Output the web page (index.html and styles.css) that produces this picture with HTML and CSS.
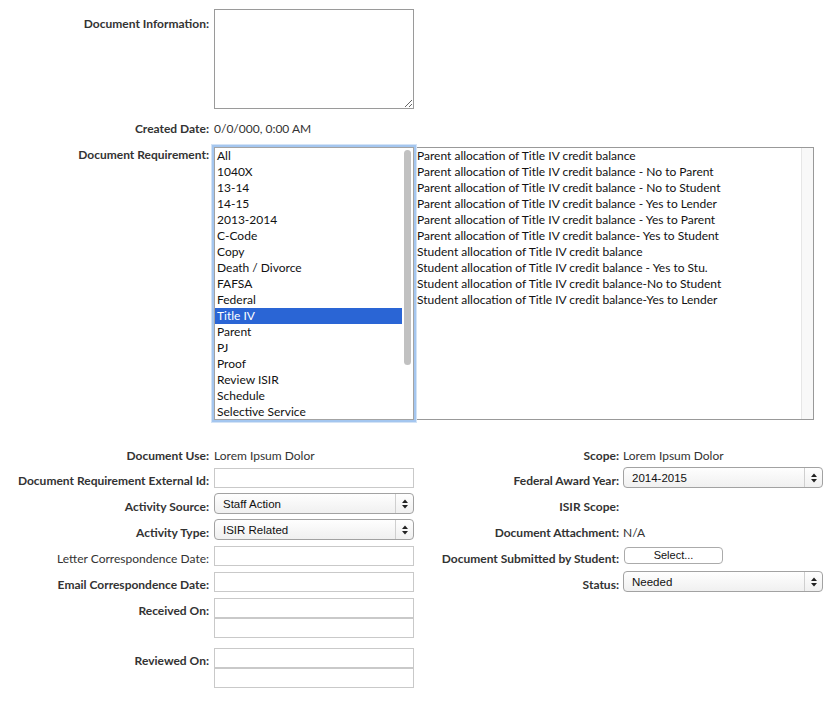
FILE: index.html
```html
<!DOCTYPE html>
<html>
<head>
<meta charset="utf-8">
<title>Document</title>
<link rel="stylesheet" href="styles.css">
</head>
<body>
<div class="page">
  <div class="top">
    <div class="row">
      <div class="label lbl-info">Document Information:</div>
      <textarea class="ta"></textarea>
    </div>
    <div class="row r-created">
      <div class="label">Created Date:</div>
      <div class="value">0/0/000, 0:00 AM</div>
    </div>
    <div class="row r-req">
      <div class="label">Document Requirement:</div>
      <div class="listbox">
        <ul class="items">
          <li>All</li>
          <li>1040X</li>
          <li>13-14</li>
          <li>14-15</li>
          <li>2013-2014</li>
          <li>C-Code</li>
          <li>Copy</li>
          <li>Death / Divorce</li>
          <li>FAFSA</li>
          <li>Federal</li>
          <li class="selected">Title IV</li>
          <li>Parent</li>
          <li>PJ</li>
          <li>Proof</li>
          <li>Review ISIR</li>
          <li>Schedule</li>
          <li>Selective Service</li>
        </ul>
        <div class="vscroll"><div class="thumb"></div></div>
      </div>
      <div class="reslist">
        <ul class="items">
          <li>Parent allocation of Title IV credit balance</li>
          <li>Parent allocation of Title IV credit balance - No to Parent</li>
          <li>Parent allocation of Title IV credit balance - No to Student</li>
          <li>Parent allocation of Title IV credit balance - Yes to Lender</li>
          <li>Parent allocation of Title IV credit balance - Yes to Parent</li>
          <li>Parent allocation of Title IV credit balance- Yes to Student</li>
          <li>Student allocation of Title IV credit balance</li>
          <li>Student allocation of Title IV credit balance - Yes to Stu.</li>
          <li>Student allocation of Title IV credit balance-No to Student</li>
          <li>Student allocation of Title IV credit balance-Yes to Lender</li>
        </ul>
        <div class="track"></div>
      </div>
    </div>
  </div>

  <div class="bottom">
    <div class="col col-left">
      <div class="f first">
        <div class="flabel">Document Use:</div>
        <div class="fval">Lorem Ipsum Dolor</div>
      </div>
      <div class="f">
        <div class="flabel">Document Requirement External Id:</div>
        <div class="input"></div>
      </div>
      <div class="f">
        <div class="flabel">Activity Source:</div>
        <div class="dd"><span class="dd-text">Staff Action</span><span class="dd-arrow"><svg width="6" height="10" viewBox="0 0 6 10"><polygon points="3,0.5 6,4 0,4" fill="#222"/><polygon points="0,6 6,6 3,9.5" fill="#222"/></svg></span></div>
      </div>
      <div class="f">
        <div class="flabel">Activity Type:</div>
        <div class="dd"><span class="dd-text">ISIR Related</span><span class="dd-arrow"><svg width="6" height="10" viewBox="0 0 6 10"><polygon points="3,0.5 6,4 0,4" fill="#222"/><polygon points="0,6 6,6 3,9.5" fill="#222"/></svg></span></div>
      </div>
      <div class="f">
        <div class="flabel normal">Letter Correspondence Date:</div>
        <div class="input"></div>
      </div>
      <div class="f">
        <div class="flabel">Email Correspondence Date:</div>
        <div class="input"></div>
      </div>
      <div class="f tall">
        <div class="flabel">Received On:</div>
        <div class="stack"><div class="input"></div><div class="input"></div></div>
      </div>
      <div class="f tall">
        <div class="flabel">Reviewed On:</div>
        <div class="stack"><div class="input"></div><div class="input"></div></div>
      </div>
    </div>

    <div class="col col-right">
      <div class="f first">
        <div class="flabel">Scope:</div>
        <div class="fval">Lorem Ipsum Dolor</div>
      </div>
      <div class="f">
        <div class="flabel">Federal Award Year:</div>
        <div class="dd"><span class="dd-text">2014-2015</span><span class="dd-arrow"><svg width="6" height="10" viewBox="0 0 6 10"><polygon points="3,0.5 6,4 0,4" fill="#222"/><polygon points="0,6 6,6 3,9.5" fill="#222"/></svg></span></div>
      </div>
      <div class="f">
        <div class="flabel">ISIR Scope:</div>
        <div class="fval"></div>
      </div>
      <div class="f">
        <div class="flabel">Document Attachment:</div>
        <div class="fval">N/A</div>
      </div>
      <div class="f">
        <div class="flabel">Document Submitted by Student:</div>
        <div class="btn">Select...</div>
      </div>
      <div class="f">
        <div class="flabel">Status:</div>
        <div class="dd"><span class="dd-text">Needed</span><span class="dd-arrow"><svg width="6" height="10" viewBox="0 0 6 10"><polygon points="3,0.5 6,4 0,4" fill="#222"/><polygon points="0,6 6,6 3,9.5" fill="#222"/></svg></span></div>
      </div>
    </div>
  </div>
</div>
</body>
</html>
```

FILE: styles.css
```css
* { box-sizing: border-box; }

body {
  margin: 0;
  background: #fff;
  font-family: Lato, "Open Sans", sans-serif;
  font-size: 12px;
  color: #333;
}

.top { padding-top: 9px; }

.row {
  display: flex;
  align-items: flex-start;
}

.label {
  width: 209px;
  margin-right: 5px;
  flex-shrink: 0;
  text-align: right;
  font-weight: bold;
  line-height: 16px;
  color: #333;
}

.lbl-info { padding-top: 7px; }

.ta {
  display: block;
  width: 200px;
  height: 100px;
  margin: 0;
  padding: 2px;
  border: 1px solid #9a9a9a;
  font: inherit;
  resize: both;
}

.r-created { margin-top: 12px; line-height: 16px; }
.value { line-height: 16px; }

.r-req { margin-top: 10px; }

.listbox {
  position: relative;
  z-index: 1;
  display: flex;
  width: 200px;
  height: 273px;
  border: 1px solid #a3a3a3;
  background: #fff;
  box-shadow: 0 0 0 2px #a4c6ef, 0 0 0 3px #d3e3f6;
}

.items {
  flex: 1;
  margin: 0;
  padding: 0;
  list-style: none;
  overflow: hidden;
  color: #111;
}

.items li {
  padding-left: 2px;
  line-height: 16px;
  white-space: nowrap;
}

.items li.selected {
  background: #2a65d5;
  color: #fff;
}

.vscroll {
  width: 11px;
  padding: 2px 2px 0 2px;
  flex-shrink: 0;
}

.thumb {
  width: 7px;
  height: 215px;
  border-radius: 4px;
  background: #c1c1c1;
}

.reslist {
  display: flex;
  width: 400px;
  height: 273px;
  border: 1px solid #999;
  background: #fff;
}

.track {
  width: 12px;
  flex-shrink: 0;
  background: #f8f8f8;
  border-left: 1px solid #e6e6e6;
}

.bottom {
  display: flex;
  margin-top: 20px;
}

.col-left { width: 414px; }
.col-right { width: 409px; }

.f {
  display: flex;
  align-items: flex-start;
  height: 26px;
}

.f.tall { height: 50px; }

.flabel {
  flex-shrink: 0;
  padding-top: 7px;
  text-align: right;
  font-weight: bold;
  line-height: 16px;
  color: #333;
}

.flabel.normal { font-weight: normal; }

.col-left .flabel { width: 209px; margin-right: 5px; }
.col-right .flabel { width: 205px; margin-right: 4px; }

.fval {
  padding-top: 7px;
  line-height: 16px;
}

.f.first .flabel,
.f.first .fval { padding-top: 8px; }

.input {
  width: 200px;
  height: 20px;
  margin-top: 2px;
  border: 1px solid #c9c9c9;
  background: #fff;
}

.stack .input + .input { margin-top: 0; }

.dd {
  display: flex;
  align-items: center;
  width: 200px;
  height: 21px;
  margin-top: 1px;
  border: 1px solid #a2a2a2;
  border-radius: 4px;
  background: linear-gradient(#fefefe, #f0f0f0);
  font-family: "Liberation Sans", Arial, sans-serif;
  font-size: 11.5px;
  color: #111;
}

.dd-text {
  flex: 1;
  padding-left: 8px;
}

.dd-arrow {
  display: flex;
  align-items: center;
  justify-content: center;
  width: 18px;
  height: 100%;
  border-left: 1px solid #cfcfcf;
}

.btn {
  width: 99px;
  height: 17px;
  margin-top: 3px;
  margin-left: 1px;
  border: 1px solid #ababab;
  border-radius: 4px;
  background: #fff;
  font-family: "Liberation Sans", Arial, sans-serif;
  font-size: 11px;
  line-height: 15px;
  text-align: center;
  color: #111;
}
```
